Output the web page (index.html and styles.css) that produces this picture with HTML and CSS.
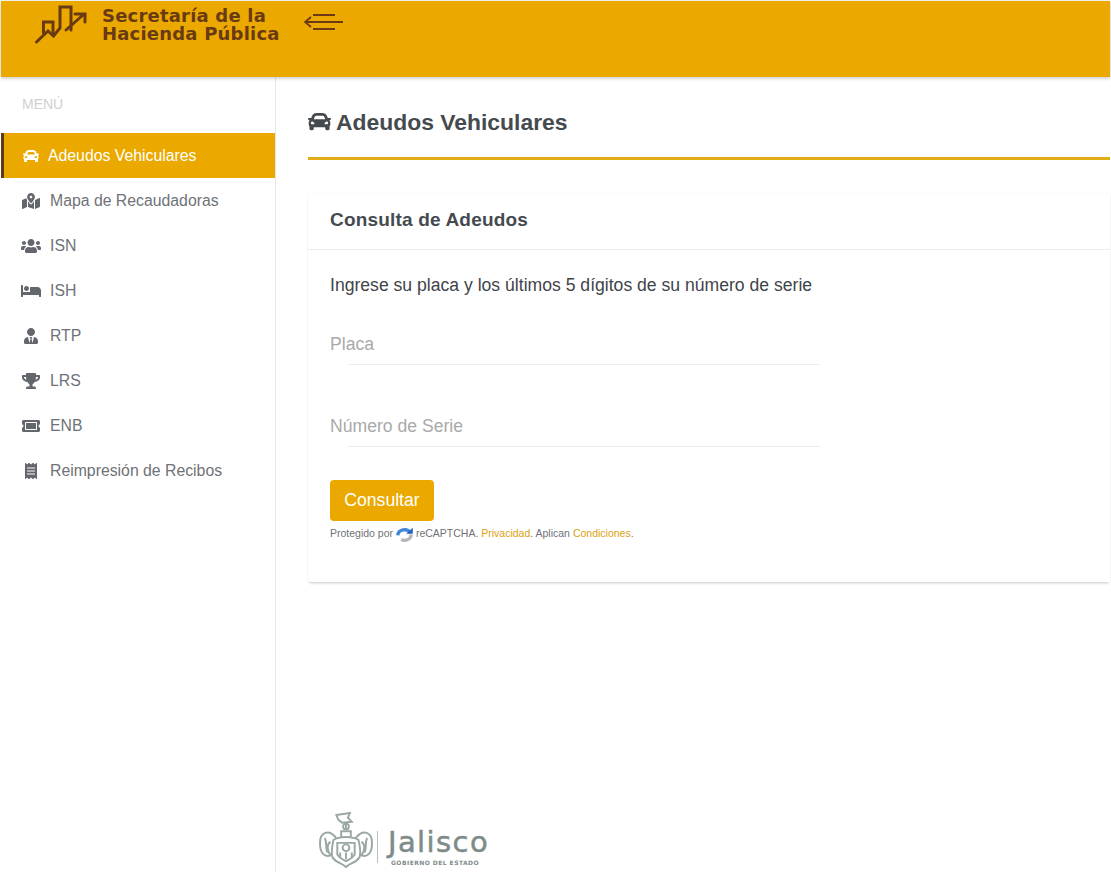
FILE: index.html
```html
<!DOCTYPE html>
<html lang="es">
<head>
<meta charset="utf-8">
<title>Adeudos Vehiculares</title>
<link rel="stylesheet" href="styles.css">
</head>
<body>
<svg class="defs" width="0" height="0" aria-hidden="true">
  <symbol id="i-car" viewBox="0 0 512 512"><path d="M499.99 176h-59.87l-16.64-41.6C406.38 91.63 365.57 64 319.5 64h-127c-46.06 0-86.88 27.63-103.99 70.4L71.87 176H12.01C4.2 176-1.53 183.34.37 190.91l6 24C7.7 220.25 12.5 224 18.01 224h20.07C24.65 235.73 16 252.78 16 272v48c0 16.12 6.16 30.67 16 41.93V416c0 17.67 14.33 32 32 32h32c17.67 0 32-14.33 32-32v-32h256v32c0 17.67 14.33 32 32 32h32c17.67 0 32-14.33 32-32v-54.07c9.84-11.25 16-25.8 16-41.93v-48c0-19.22-8.65-36.27-22.07-48H494c5.51 0 10.31-3.75 11.64-9.09l6-24c1.89-7.57-3.84-14.91-11.65-14.91zm-352.06-17.83c7.29-18.22 24.94-30.17 44.57-30.17h127c19.63 0 37.28 11.95 44.57 30.17L384 208H128l19.93-49.83zM96 319.8c-19.2 0-32-12.76-32-31.9S76.8 256 96 256s48 28.71 48 47.85-28.8 15.95-48 15.95zm320 0c-19.2 0-48 3.19-48-15.95S396.8 256 416 256s32 12.76 32 31.9-12.8 31.9-32 31.9z"/></symbol>
  <symbol id="i-map" viewBox="0 0 576 512"><path d="M288 0c-69.59 0-126 56.41-126 126 0 56.26 82.35 158.8 113.9 196.02 6.39 7.54 17.82 7.54 24.2 0C331.65 284.8 414 182.26 414 126 414 56.41 357.59 0 288 0zm0 168c-23.2 0-42-18.8-42-42s18.8-42 42-42 42 18.8 42 42-18.8 42-42 42zM20.12 215.95A32.006 32.006 0 0 0 0 245.66v250.32c0 11.32 11.43 19.06 21.94 14.86L160 448V214.92c-8.84-15.98-16.07-31.54-21.25-46.42L20.12 215.95zM288 359.67c-14.07 0-27.38-6.18-36.51-16.96-19.66-23.2-40.57-49.62-59.49-76.72V448l192 64V266c-18.92 27.09-39.82 53.52-59.49 76.72-9.13 10.77-22.44 16.95-36.51 16.95zm266.06-198.51L416 224v288l139.88-55.95A31.996 31.996 0 0 0 576 426.34V176.02c0-11.32-11.43-19.06-21.94-14.86z"/></symbol>
  <symbol id="i-users" viewBox="0 0 640 512"><path d="M96 224c35.3 0 64-28.7 64-64s-28.7-64-64-64-64 28.7-64 64 28.7 64 64 64zm448 0c35.3 0 64-28.7 64-64s-28.7-64-64-64-64 28.7-64 64 28.7 64 64 64zm32 32h-64c-17.6 0-33.5 7.1-45.1 18.6 40.3 22.1 68.9 62 75.1 109.4h66c17.7 0 32-14.3 32-32v-32c0-35.3-28.7-64-64-64zm-256 0c61.9 0 112-50.1 112-112S381.9 32 320 32 208 82.1 208 144s50.1 112 112 112zm76.8 32h-8.3c-20.8 10-43.9 16-68.5 16s-47.6-6-68.5-16h-8.3C179.6 288 128 339.6 128 403.2V432c0 26.5 21.5 48 48 48h288c26.5 0 48-21.5 48-48v-28.8c0-63.6-51.6-115.2-115.2-115.2zm-223.7-13.4C161.5 263.1 145.6 256 128 256H64c-35.3 0-64 28.7-64 64v32c0 17.7 14.3 32 32 32h65.9c6.3-47.4 34.9-87.3 75.2-109.4z"/></symbol>
  <symbol id="i-bed" viewBox="0 0 640 512"><path d="M176 256c44.11 0 80-35.89 80-80s-35.89-80-80-80-80 35.89-80 80 35.89 80 80 80zm352-128H304c-8.84 0-16 7.16-16 16v144H64V80c0-8.84-7.16-16-16-16H16C7.16 64 0 71.16 0 80v352c0 8.84 7.16 16 16 16h32c8.84 0 16-7.16 16-16v-48h512v48c0 8.84 7.16 16 16 16h32c8.84 0 16-7.16 16-16V240c0-61.86-50.14-112-112-112z"/></symbol>
  <symbol id="i-tie" viewBox="0 0 448 512"><path d="M224 256c70.7 0 128-57.3 128-128S294.7 0 224 0 96 57.3 96 128s57.3 128 128 128zm95.8 32.6L272 480l-32-136 32-56h-96l32 56-32 136-47.8-191.4C56.9 292 0 350.3 0 422.4V464c0 26.5 21.5 48 48 48h352c26.5 0 48-21.5 48-48v-41.6c0-72.1-56.9-130.4-128.2-133.8z"/></symbol>
  <symbol id="i-trophy" viewBox="0 0 576 512"><path d="M552 64H448V24c0-13.3-10.7-24-24-24H152c-13.3 0-24 10.7-24 24v40H24C10.7 64 0 74.7 0 88v56c0 35.7 22.5 72.4 61.9 100.7 31.5 22.7 69.8 37.1 110 41.7C203.3 338.5 240 360 240 360v72h-48c-35.3 0-64 20.7-64 56v12c0 6.6 5.4 12 12 12h296c6.6 0 12-5.4 12-12v-12c0-35.3-28.7-56-64-56h-48v-72s36.7-21.5 68.1-73.6c40.3-4.6 78.7-19 110-41.7 39.3-28.3 61.9-65 61.9-100.7V88c0-13.3-10.7-24-24-24zM99.3 192.8C74.9 175.2 64 155.6 64 144v-16h64.2c1 32.6 5.8 61.2 12.8 86.2-15.1-5.2-29.2-12.4-41.7-21.4zM512 144c0 16.1-17.7 36.1-35.3 48.8-12.5 9-26.7 16.2-41.8 21.4 7-25 11.8-53.6 12.8-86.2H512v16z"/></symbol>
  <symbol id="i-ticket" viewBox="0 0 576 512"><path d="M128 160h320v192H128V160zm400 96c0 26.51 21.49 48 48 48v96c0 26.51-21.49 48-48 48H48c-26.51 0-48-21.49-48-48v-96c26.51 0 48-21.49 48-48s-21.49-48-48-48v-96c0-26.51 21.49-48 48-48h480c26.51 0 48 21.49 48 48v96c-26.51 0-48 21.49-48 48zm-48-104c0-13.255-10.745-24-24-24H120c-13.255 0-24 10.745-24 24v208c0 13.255 10.745 24 24 24h336c13.255 0 24-10.745 24-24V152z"/></symbol>
  <symbol id="i-receipt" viewBox="0 0 384 512"><path d="M358.4 3.2L320 48 265.6 3.2a15.9 15.9 0 0 0-19.2 0L192 48 137.6 3.2a15.9 15.9 0 0 0-19.2 0L64 48 25.6 3.2C15-4.7 0 2.8 0 16v480c0 13.2 15 20.7 25.6 12.8L64 464l54.4 44.8a15.9 15.9 0 0 0 19.2 0L192 464l54.4 44.8a15.9 15.9 0 0 0 19.2 0L320 464l38.4 44.8c10.5 7.9 25.6.4 25.6-12.8V16c0-13.2-15-20.7-25.6-12.8zM320 360c0 4.4-3.6 8-8 8H72c-4.4 0-8-3.6-8-8v-16c0-4.4 3.6-8 8-8h240c4.4 0 8 3.6 8 8v16zm0-96c0 4.4-3.6 8-8 8H72c-4.4 0-8-3.6-8-8v-16c0-4.4 3.6-8 8-8h240c4.4 0 8 3.6 8 8v16zm0-96c0 4.4-3.6 8-8 8H72c-4.4 0-8-3.6-8-8v-16c0-4.4 3.6-8 8-8h240c4.4 0 8 3.6 8 8v16z"/></symbol>
</svg>

<header class="topbar">
  <div class="brand">
    <svg class="brand-mark" viewBox="0 0 52 42" fill="none" stroke="#6a3a13" stroke-width="3" stroke-linecap="round" stroke-linejoin="miter">
      <path d="M1.5 38 L13 27 L18.5 32 L25 24 V3 H36 V26"/>
      <path d="M8.5 29 V18 H18 V31"/>
      <path d="M31 26 L48 11 M40 10 H50 V18"/>
    </svg>
    <div class="brand-name">Secretaría de la<br>Hacienda Pública</div>
  </div>
  <svg class="menu-toggle" viewBox="0 0 40 18" fill="none" stroke="#6a3a13" stroke-width="1.8">
    <path d="M9 2 H31 M1 9 H39 M9 16 H31 M7 4 L1 9 L7 14"/>
  </svg>
</header>

<div class="shell">
  <aside class="sidebar">
    <div class="menu-title">MENÚ</div>
    <nav class="menu">
      <a class="menu-item is-active"><svg class="menu-icon"><use href="#i-car"/></svg><span>Adeudos Vehiculares</span></a>
      <a class="menu-item"><svg class="menu-icon"><use href="#i-map"/></svg><span>Mapa de Recaudadoras</span></a>
      <a class="menu-item"><svg class="menu-icon"><use href="#i-users"/></svg><span>ISN</span></a>
      <a class="menu-item"><svg class="menu-icon"><use href="#i-bed"/></svg><span>ISH</span></a>
      <a class="menu-item"><svg class="menu-icon"><use href="#i-tie"/></svg><span>RTP</span></a>
      <a class="menu-item"><svg class="menu-icon"><use href="#i-trophy"/></svg><span>LRS</span></a>
      <a class="menu-item"><svg class="menu-icon"><use href="#i-ticket"/></svg><span>ENB</span></a>
      <a class="menu-item"><svg class="menu-icon"><use href="#i-receipt"/></svg><span>Reimpresión de Recibos</span></a>
    </nav>
  </aside>

  <main class="content">
    <h1 class="page-title"><svg class="title-icon"><use href="#i-car"/></svg>Adeudos Vehiculares</h1>
    <section class="card">
      <h2 class="card-title">Consulta de Adeudos</h2>
      <div class="card-body">
        <p class="lead">Ingrese su placa y los últimos 5 dígitos de su número de serie</p>
        <div class="field"><input class="field-input" type="text" placeholder="Placa"></div>
        <div class="field"><input class="field-input" type="text" placeholder="Número de Serie"></div>
        <button class="btn" type="button">Consultar</button>
        <p class="legal">Protegido por <svg class="captcha" viewBox="0 0 20 18" fill="none" stroke-width="4"><path d="M2 10 A8 7 0 0 1 17 7" stroke="#3f86d8"/><path d="M18 9 A8 7 0 0 1 6 15" stroke="#b4b8bd"/><path d="M12 8 H20 V1 Z" fill="#2c5fc4" stroke="none"/></svg> reCAPTCHA. <a class="legal-link">Privacidad</a>. Aplican <a class="legal-link">Condiciones</a>.</p>
      </div>
    </section>
    <footer class="gov-logo">
      <svg class="crest" viewBox="0 0 56 58" fill="none" stroke="#9aa7a5" stroke-width="2">
        <path d="M18 3 L32 1 L30 6 L34 10 L24 11 L20 8 Z M28 11 V18"/>
        <circle cx="28" cy="15" r="3"/>
        <path d="M23 20 H33 V26 H23 Z"/>
        <path d="M18 27 C10 17 1 21 1 32 C1 43 6 47 12 45 C8 40 8 33 12 31 M38 27 C46 17 55 21 55 32 C55 43 50 47 44 45 C48 40 48 33 44 31"/>
        <path d="M15 29 C14 35 12 40 14 47 C18 53 24 53 28 57 C32 53 38 53 42 47 C44 40 42 35 41 29 C36 25 20 25 15 29 Z"/>
        <path d="M19 32 H37 V44 C34 49 31 49 28 51 C25 49 22 49 19 44 Z"/>
        <path d="M6 27 C9 32 6 38 9 42 M50 27 C47 32 50 38 47 42"/>
        <circle cx="28" cy="37" r="3.5"/>
        <path d="M22 42 V47 M28 42 V49 M34 42 V47"/>
      </svg>
      <span class="gov-divider"></span>
      <div class="gov-text">
        <div class="gov-name">Jalisco</div>
        <div class="gov-sub">GOBIERNO DEL ESTADO</div>
      </div>
    </footer>
  </main>
</div>
</body>
</html>
```
FILE: styles.css
```css
* { box-sizing: border-box; }
html, body { height: 100%; }
body {
  margin: 0;
  padding: 1px 1px 2px 1px;
  height: 874px;
  overflow: hidden;
  display: flex;
  flex-direction: column;
  background: #fff;
  color: #454a4f;
  font-family: "Liberation Sans", Arial, sans-serif;
  font-size: 16px;
}
.defs { position: absolute; }

.topbar {
  position: relative;
  z-index: 2;
  flex: 0 0 76px;
  display: flex;
  align-items: flex-start;
  background: #eba900;
  box-shadow: 0 1px 4px rgba(0, 0, 0, .25);
}
.brand { display: flex; align-items: flex-start; margin-left: 34px; }
.brand-mark { width: 52px; height: 42px; margin-top: 3px; }
.brand-name {
  margin: 6px 0 0 15px;
  color: #6a3a13;
  font-family: "DejaVu Sans", sans-serif;
  font-weight: 700;
  font-size: 18px;
  line-height: 18px;
  letter-spacing: .2px;
  white-space: nowrap;
}
.menu-toggle { width: 40px; height: 18px; margin: 12px 0 0 24px; }

.shell { flex: 1; display: flex; min-height: 0; }

.sidebar {
  flex: 0 0 275px;
  border-right: 1px solid #e6e6e6;
}
.menu-title {
  padding: 19px 0 0 21px;
  height: 56px;
  color: #d0d0d0;
  font-size: 14px;
  line-height: 16px;
}
.menu { display: flex; flex-direction: column; }
.menu-item {
  height: 45px;
  display: flex;
  align-items: center;
  padding-left: 20px;
  color: #6f7277;
  font-size: 15.8px;
  line-height: 45px;
}
.menu-icon { width: 20px; height: 16px; margin-right: 9px; fill: #63666c; flex: none; }
.is-active {
  background: #eba900;
  color: #fff;
  border-left: 3px solid #5e3a17;
  padding-left: 17px;
}
.is-active .menu-icon { fill: #fff; width: 18px; margin: 0 8px 0 1px; }

.content {
  flex: 1;
  min-width: 0;
  padding-left: 32px;
  display: flex;
  flex-direction: column;
}
.page-title {
  margin: 0;
  height: 83px;
  padding-top: 30px;
  border-bottom: 3px solid #e2ac17;
  color: #454a4f;
  font-size: 22.9px;
  line-height: 30px;
  font-weight: 700;
  display: flex;
  align-items: flex-start;
}
.title-icon { width: 23px; height: 23px; margin: 3px 5px 0 0; fill: #454a4f; flex: none; }

.card {
  margin-top: 33px;
  height: 389px;
  flex: none;
  background: #fff;
  box-shadow: 0 2px 3px -1px rgba(0, 0, 0, .2), 0 0 2px rgba(0, 0, 0, .06);
  border-radius: 2px 0 0 2px;
}
.card-title {
  margin: 0;
  height: 57px;
  padding: 15px 22px 0;
  border-bottom: 1px solid #ececec;
  color: #454a4f;
  font-size: 19px;
  line-height: 24px;
  font-weight: 700;
  letter-spacing: .18px;
}
.card-body { padding: 0 22px; }
.lead { margin: 0; padding-top: 25px; font-size: 17.6px; line-height: 20px; color: #3f4449; }

.field { position: relative; width: 490px; height: 41px; margin-top: 29px; }
.field + .field { margin-top: 41px; }
.field::after {
  content: "";
  position: absolute;
  left: 18px;
  right: 0;
  bottom: 0;
  height: 1px;
  background: #ececec;
}
.field-input {
  width: 100%;
  height: 40px;
  padding: 0;
  border: 0;
  outline: 0;
  background: transparent;
  font: inherit;
  font-size: 17.6px;
  color: #454a4f;
}
.field-input::placeholder { color: #a9a9a9; opacity: 1; }

.btn {
  display: block;
  margin-top: 33px;
  width: 104px;
  height: 41px;
  padding: 0;
  border: 0;
  border-radius: 4px;
  background: #eba900;
  color: #fff;
  font: inherit;
  font-size: 17.6px;
}
.legal {
  margin: 4px 0 0;
  color: #6f7277;
  font-size: 10.5px;
  line-height: 16px;
}
.captcha { width: 17px; height: 15px; vertical-align: middle; }
.legal-link { color: #dba10f; }

.gov-logo {
  margin-top: auto;
  margin-left: 11px;
  height: 60px;
  display: flex;
  align-items: flex-start;
}
.crest { width: 54px; height: 56px; flex: none; }
.gov-divider { width: 1px; height: 32px; margin: 19px 10px 0 4px; background: #b8c0bf; }
.gov-text { padding-top: 15px; color: #7d8b89; }
.gov-name {
  font-family: "DejaVu Sans", sans-serif;
  font-size: 29px;
  line-height: 30px;
  letter-spacing: 1.4px;
  -webkit-text-stroke: .5px #7d8b89;
}
.gov-sub {
  margin: 2px 0 0 3px;
  font-family: "DejaVu Sans", sans-serif;
  font-size: 6px;
  font-weight: 700;
  line-height: 8px;
  letter-spacing: .45px;
}
```
